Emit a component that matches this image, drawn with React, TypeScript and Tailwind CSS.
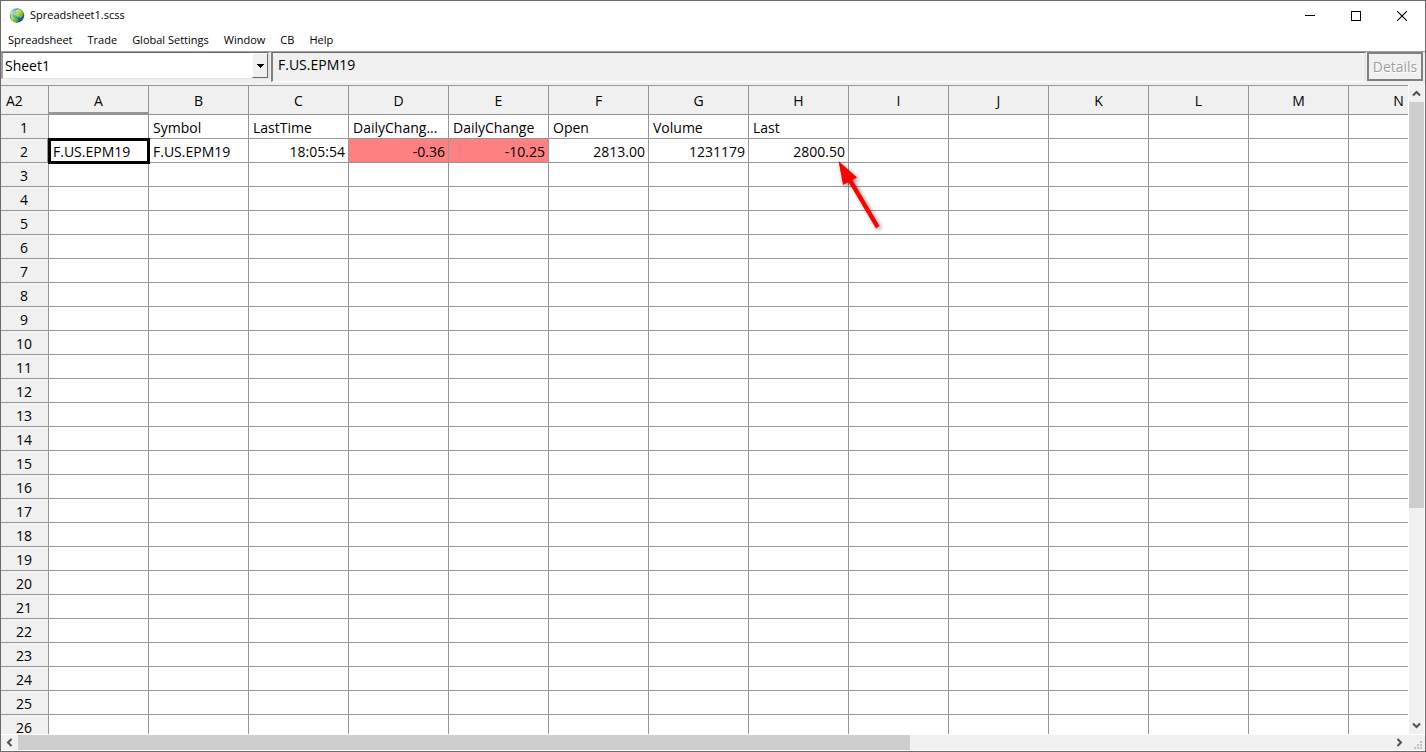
import React from 'react';

type Align = 'left' | 'right';

interface CellData {
    text: string;
    align?: Align;
    negative?: boolean;
}

const MENU = ['Spreadsheet', 'Trade', 'Global Settings', 'Window', 'CB', 'Help'];
const COLUMNS = 'ABCDEFGHIJKLMN'.split('');
const ROWS = Array.from({ length: 26 }, (_, i) => i + 1);
const SELECTED = { column: 'A', row: 2 };

const CELLS: Record<string, CellData> = {
    B1: { text: 'Symbol' },
    C1: { text: 'LastTime' },
    D1: { text: 'DailyChang...' },
    E1: { text: 'DailyChange' },
    F1: { text: 'Open' },
    G1: { text: 'Volume' },
    H1: { text: 'Last' },
    A2: { text: 'F.US.EPM19' },
    B2: { text: 'F.US.EPM19' },
    C2: { text: '18:05:54', align: 'right' },
    D2: { text: '-0.36', align: 'right', negative: true },
    E2: { text: '-10.25', align: 'right', negative: true },
    F2: { text: '2813.00', align: 'right' },
    G2: { text: '1231179', align: 'right' },
    H2: { text: '2800.50', align: 'right' },
};

const GlobeIcon = () => (
    <svg width="16" height="16" viewBox="0 0 16 16" aria-hidden="true">
        <defs>
            <radialGradient id="sea" cx="30%" cy="30%" r="80%">
                <stop offset="0" stopColor="#a5dcf5" />
                <stop offset="0.45" stopColor="#3a93cc" />
                <stop offset="1" stopColor="#0c3f78" />
            </radialGradient>
            <linearGradient id="land" x1="0" y1="0" x2="1" y2="1">
                <stop offset="0" stopColor="#e4f07a" />
                <stop offset="0.5" stopColor="#a6d436" />
                <stop offset="1" stopColor="#4c8f1c" />
            </linearGradient>
        </defs>
        <circle cx="8" cy="7.5" r="7.2" fill="url(#sea)" />
        <path d="M6.6 2.4 9.6 1 12.6 2.4 14.4 5.4 13.8 8.6 11.8 10.2 10.4 9 8.2 8.8 6.2 7 7 4.6z" fill="url(#land)" />
        <path d="M1.2 6.2 3 3.4 4.8 3 4.4 5.6 3.2 7.6 5.4 9.4 8 10.6 9.4 12.2 8.2 14.4 5 14 2.4 11.8z" fill="url(#land)" />
    </svg>
);

const TitleBar = () => (
    <header className="flex h-[29px] shrink-0 items-center bg-white pl-2">
        <GlobeIcon />
        <h1 className="ml-[5px] flex-1 text-[11px]">Spreadsheet1.scss</h1>
        <button type="button" aria-label="Minimize" className="flex h-full w-[46px] items-center justify-center">
            <svg width="10" height="10" viewBox="0 0 10 10" shapeRendering="crispEdges">
                <path d="M0 4.5h10" stroke="#000" />
            </svg>
        </button>
        <button type="button" aria-label="Maximize" className="flex h-full w-[46px] items-center justify-center">
            <svg width="10" height="10" viewBox="0 0 10 10" shapeRendering="crispEdges">
                <path d="M.5.5h9v9h-9z" stroke="#000" fill="none" />
            </svg>
        </button>
        <button type="button" aria-label="Close" className="flex h-full w-[46px] items-center justify-center">
            <svg width="10" height="10" viewBox="0 0 10 10">
                <path d="M0 0 10 10M10 0 0 10" stroke="#000" strokeWidth="1.1" />
            </svg>
        </button>
    </header>
);

const MenuBar = () => (
    <nav className="flex h-[21px] shrink-0 items-center gap-[15px] bg-white pl-[7px] text-[11px]">
        {MENU.map((item) => (
            <button key={item} type="button" className="whitespace-nowrap">
                {item}
            </button>
        ))}
    </nav>
);

const Toolbar = () => (
    <div className="flex h-[34px] shrink-0 items-start border-t border-[#a0a0a0]">
        <div className="relative h-[27px] w-[269px] shrink-0 border-t border-r-2 border-b border-l-2 border-t-[#696969] border-r-[#e3e3e3] border-b-[#e3e3e3] border-l-[#a0a0a0]">
            <select aria-label="Sheet" className="block h-full w-full appearance-none bg-white pb-px pl-[2px] text-[14px] outline-none">
                <option>Sheet1</option>
            </select>
            <span className="pointer-events-none absolute top-0 right-0 flex h-full w-4 items-center justify-center border border-t-white border-r-[#696969] border-b-[#696969] border-l-white bg-[#f0f0f0]">
                <svg width="7" height="4" viewBox="0 0 7 4" shapeRendering="crispEdges">
                    <path d="M0 0h7v1H0zM1 1h5v1H1zM2 2h3v1H2zM3 3h1v1H3z" />
                </svg>
            </span>
        </div>
        <input
            aria-label="Cell content"
            defaultValue="F.US.EPM19"
            readOnly
            className="ml-px h-[30px] min-w-0 flex-1 border-t border-r border-b border-l-2 border-t-[#696969] border-r-[#e3e3e3] border-b-white border-l-[#808080] bg-[#f0f0f0] pb-[6px] pl-[5px] text-[14px] outline-none"
        />
        <button
            type="button"
            disabled
            className="mr-[2px] ml-px h-[29px] w-14 shrink-0 border-2 border-[#808080] bg-[#f0f0f0] text-[14px] text-[#a0a0a0] [text-shadow:1px_1px_0_#fff]"
        >
            Details
        </button>
    </div>
);

const Sheet = () => (
    <div className="min-w-0 flex-1 overflow-hidden border-t border-t-[#969696] bg-white">
        <table className="w-[1448px] table-fixed border-separate border-spacing-0 text-[14px] leading-5">
            <colgroup>
                <col className="w-12" />
                {COLUMNS.map((column) => (
                    <col key={column} className="w-[100px]" />
                ))}
            </colgroup>
            <thead>
                <tr className="h-[29px] bg-[#f0f0f0]">
                    <th className="border-r border-b border-[#969696] pt-[2px] pr-0 pb-0 pl-[5px] text-left font-normal">
                        {SELECTED.column}
                        {SELECTED.row}
                    </th>
                    {COLUMNS.map((column) => (
                        <th
                            key={column}
                            scope="col"
                            className={`border-r border-[#969696] px-0 pb-0 font-normal ${column === SELECTED.column ? 'border-b-[3px] pt-1' : 'border-b pt-[2px]'}`}
                        >
                            {column}
                        </th>
                    ))}
                </tr>
            </thead>
            <tbody>
                {ROWS.map((row) => (
                    <tr key={row} className="h-6">
                        <th
                            scope="row"
                            className={`border-b border-[#969696] bg-[#f0f0f0] pt-[2px] pb-0 pl-0 font-normal ${row === SELECTED.row ? 'border-r-2 pr-0' : 'border-r pr-px'}`}
                        >
                            {row}
                        </th>
                        {COLUMNS.map((column) => {
                            const cell = CELLS[`${column}${row}`];
                            const selected = column === SELECTED.column && row === SELECTED.row;
                            return (
                                <td
                                    key={column}
                                    className={`border-r border-b border-[#969696] pt-[2px] pb-0 pl-1 whitespace-nowrap ${cell?.align === 'right' ? 'pr-[3px] text-right' : 'pr-0'} ${cell?.negative ? 'bg-[#ff8080]' : ''} ${selected ? 'outline-3 -outline-offset-2 outline-black' : ''}`}
                                >
                                    {cell?.text}
                                </td>
                            );
                        })}
                    </tr>
                ))}
            </tbody>
        </table>
    </div>
);

interface ScrollButtonProps {
    label: string;
    path: string;
    className: string;
}

const ScrollButton: React.FC<ScrollButtonProps> = ({ label, path, className }) => (
    <button type="button" aria-label={label} className={`flex shrink-0 items-center justify-center ${className}`}>
        <svg width="9" height="9" viewBox="0 0 9 9">
            <path d={path} fill="none" stroke="#505050" strokeWidth="2" />
        </svg>
    </button>
);

const VerticalScrollbar = () => (
    <div className="flex w-[17px] shrink-0 flex-col border-r border-l border-white">
        <ScrollButton label="Scroll up" path="M1 6.5 4.5 3 8 6.5" className="h-[17px] w-full" />
        <div className="flex-1">
            <div className="h-[66%] bg-[#cdcdcd]" />
        </div>
        <ScrollButton label="Scroll down" path="M1 2.5 4.5 6 8 2.5" className="h-[17px] w-full" />
    </div>
);

const HorizontalScrollbar = () => (
    <div className="flex h-[17px] shrink-0 border-t border-b border-white">
        <ScrollButton label="Scroll left" path="M6.5 1 3 4.5 6.5 8" className="h-full w-[17px]" />
        <div className="flex-1">
            <div className="h-full w-[65%] bg-[#cdcdcd]" />
        </div>
        <ScrollButton label="Scroll right" path="M2.5 1 6 4.5 2.5 8" className="h-full w-[17px]" />
        <div className="flex w-[17px] items-end justify-end pr-[3px] pb-px">
            <svg width="8" height="8" viewBox="0 0 8 8" fill="#bfbfbf" shapeRendering="crispEdges">
                <path d="M6 0h2v2H6zM3 3h2v2H3zM6 3h2v2H6zM0 6h2v2H0zM3 6h2v2H3zM6 6h2v2H6z" />
            </svg>
        </div>
    </div>
);

// Callout over the last price
const Arrow = () => (
    <svg
        className="pointer-events-none absolute top-[68px] left-[827px] drop-shadow-[2px_2px_2px_rgba(0,0,0,0.4)]"
        width="60"
        height="84"
        viewBox="0 0 60 84"
        aria-hidden="true"
    >
        <path d="M10.5 8 29 24.5 24.5 27 51.5 73 48 75.5 20.5 29 15 32z" fill="#f00" />
    </svg>
);

export default function App() {
    return (
        <div className="flex h-screen flex-col overflow-hidden border border-[#6b696b] bg-[#f0f0f0] font-['Open_Sans','Noto_Sans',sans-serif] text-black">
            <TitleBar />
            <MenuBar />
            <Toolbar />
            <main className="relative flex min-h-0 flex-1">
                <Sheet />
                <VerticalScrollbar />
                <Arrow />
            </main>
            <HorizontalScrollbar />
        </div>
    );
}
